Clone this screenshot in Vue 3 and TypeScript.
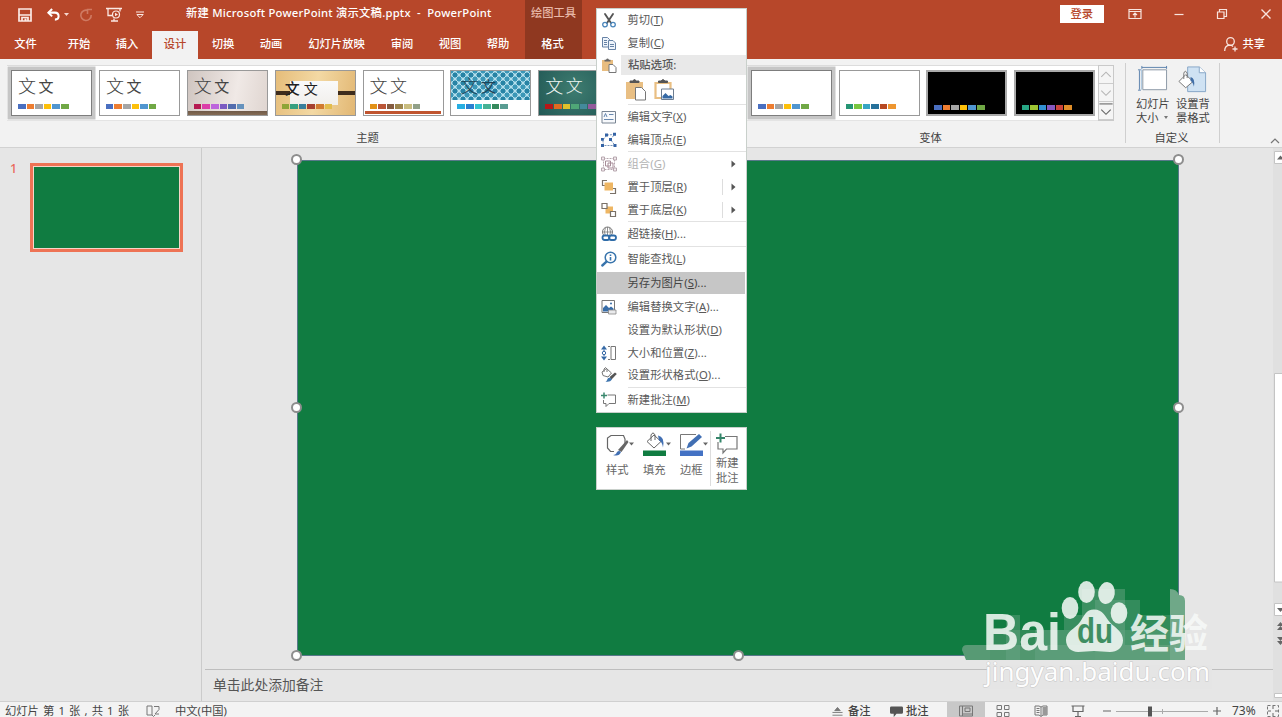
<script setup lang="ts">
interface Tab { label: string; width: number; gap?: number; active?: boolean }
interface MenuRow { kind: 'item' | 'sep' | 'head' | 'paste'; text?: string; key?: string; tail?: string; icon?: string; arrow?: boolean; split?: boolean; disabled?: boolean; selected?: boolean; blank?: boolean }
interface Thumb { skin: string; colors: string[]; selected?: boolean }

const tabs: Tab[] = [
  { label: '文件', width: 51 },
  { label: '开始', width: 48, gap: 4 },
  { label: '插入', width: 48 },
  { label: '设计', width: 48, active: true },
  { label: '切换', width: 48 },
  { label: '动画', width: 48 },
  { label: '幻灯片放映', width: 83 },
  { label: '审阅', width: 48 },
  { label: '视图', width: 48 },
  { label: '帮助', width: 48 },
]

const office = ['#4a6fc0', '#ed7d31', '#a5a5a5', '#fdc00a', '#5096d0', '#70a845']
const themes: Thumb[] = [
  { skin: 'plain', colors: office, selected: true },
  { skin: 'plain', colors: office },
  { skin: 'hall', colors: ['#b51a50', '#dc3da8', '#bd65dc', '#7b5bc2', '#536dae', '#6692bd'] },
  { skin: 'wood', colors: ['#8fa536', '#36a080', '#397f9c', '#a6402f', '#d17b30', '#e2bd4e'] },
  { skin: 'retro', colors: ['#e29116', '#bb5638', '#855c40', '#9d864e', '#c9bd80', '#91a088'] },
  { skin: 'dots', colors: ['#27aee2', '#297fd1', '#34c4d0', '#46b295', '#35895c', '#599c92'] },
  { skin: 'board', colors: ['#b71718', '#df6b22', '#dfc12b', '#4fa677', '#438a9b', '#925a9b'] },
]
const variants: Thumb[] = [
  { skin: 'plain', colors: office, selected: true },
  { skin: 'plain', colors: ['#259574', '#78c640', '#36a5c4', '#26719b', '#b74822', '#ee9630'] },
  { skin: 'black', colors: office },
  { skin: 'black', colors: ['#27a684', '#9dc433', '#328fd2', '#8557bf', '#c9433b', '#df8d28'] },
]

const rows: MenuRow[] = [
  { kind: 'item', text: '剪切', key: 'T', icon: 'cut' },
  { kind: 'item', text: '复制', key: 'C', icon: 'copy' },
  { kind: 'head', text: '粘贴选项:', icon: 'paste' },
  { kind: 'paste' },
  { kind: 'sep' },
  { kind: 'item', text: '编辑文字', key: 'X', icon: 'text' },
  { kind: 'item', text: '编辑顶点', key: 'E', icon: 'points' },
  { kind: 'sep' },
  { kind: 'item', text: '组合', key: 'G', icon: 'group', arrow: true, disabled: true },
  { kind: 'item', text: '置于顶层', key: 'R', icon: 'front', arrow: true, split: true },
  { kind: 'item', text: '置于底层', key: 'K', icon: 'back', arrow: true, split: true },
  { kind: 'sep' },
  { kind: 'item', text: '超链接', key: 'H', tail: '...', icon: 'link' },
  { kind: 'sep' },
  { kind: 'item', text: '智能查找', key: 'L', icon: 'lookup' },
  { kind: 'sep', blank: true },
  { kind: 'item', text: '另存为图片', key: 'S', tail: '...', selected: true },
  { kind: 'sep', blank: true },
  { kind: 'item', text: '编辑替换文字', key: 'A', tail: '...', icon: 'alt' },
  { kind: 'item', text: '设置为默认形状', key: 'D' },
  { kind: 'item', text: '大小和位置', key: 'Z', tail: '...', icon: 'size' },
  { kind: 'item', text: '设置形状格式', key: 'O', tail: '...', icon: 'format' },
  { kind: 'sep' },
  { kind: 'item', text: '新建批注', key: 'M', icon: 'comment' },
]

const icons: Record<string, string> = {
  cut: '<g fill="none" stroke-linecap="round"><path d="M4 2l6 9M12 2L6 11" stroke="#555" stroke-width="1.9"/><circle cx="4" cy="12.6" r="2.3" stroke="#4b86bb" stroke-width="1.3"/><circle cx="12" cy="12.6" r="2.3" stroke="#4b86bb" stroke-width="1.3"/></g>',
  copy: '<g stroke="#6682a5" fill="#eef4fb"><path d="M1.5 2.500h5l2 2v7.500h-7z"/><path d="M7.500 5.500h4.500l2.500 2.500v6.500h-7z"/><path d="M3 5.500h3M3 7.500h3M3 9.500h3M9 9.500h4M9 11.500h4" fill="none"/></g>',
  paste: '<path d="M1 3h11v11h-11z" fill="#e8bd80"/><path d="M3.500 4.500V2.800h1.500q1.500-2.600 3 0h1.500v1.700z" fill="#666"/><path d="M8 7.500h4l3 3V15.500H8z" fill="#fff" stroke="#777"/>',
  text: '<path d="M1 2.500h13.500v11.500H1z" fill="#f7f9fc" stroke="#788493"/><path d="M3 8l1.500-3.500L6 8M8 5.500h4.500M3 10.500h9.500" fill="none" stroke="#577ba6" stroke-width=".9"/>',
  points: '<path d="M2.500 13.500L1.800 8 6 3l7.500-.5-4 5 4.500 6z" fill="none" stroke="#7a96b8" stroke-dasharray="2 1"/><g fill="#3463a5"><path d="M0 12h3v3H0zM0 6h2.800v2.800H0zM4 1.500h3v3H4zM12 .8h3v3h-3zM8 6h3v3H8zM12.500 12h3v3h-3z"/></g>',
  group: '<g fill="none" stroke="#b6a6ae"><path d="M2.500 2.500h11v11h-11z" stroke-dasharray="2 1"/><path d="M4.500 5h5v5h-5zM7 7h5v5H7z" stroke="#a78c98"/><path d="M.5 1h3v3h-3zM12.500 1h3v3h-3zM.5 12h3v3h-3zM12.500 12h3v3h-3z" fill="#f3ecef"/></g>',
  front: '<path d="M6 1.500H1.500v5h4M9 14.500h5.500v-5H10" fill="#fff" stroke="#7a7168" stroke-width="1.200"/><path d="M3.500 3.500h8.500v8H3.500z" fill="#eeb663"/>',
  back: '<path d="M4.500 4.500h7.500v7H4.500z" fill="#eeb663"/><path d="M1 1.500h5v5H1zM9.500 9.500h5v5h-5z" fill="#fff" stroke="#7a7168" stroke-width="1.200"/>',
  link: '<g fill="none"><circle cx="6.500" cy="6" r="5" stroke="#777"/><path d="M1.500 6h10M6.500 1v10M4.500 1.500q-2 4.500 0 9M8.500 1.500q2 4.500 0 9" stroke="#777" stroke-width=".8"/><rect x="1.500" y="9.500" width="7" height="4.500" rx="2.200" fill="#fff" stroke="#2f6ca8" stroke-width="1.800"/><rect x="8" y="9.500" width="7" height="4.500" rx="2.200" stroke="#2f6ca8" stroke-width="1.800"/></g>',
  lookup: '<circle cx="9.500" cy="6.500" r="5.300" fill="#fff" stroke="#3874ac" stroke-width="1.500"/><path d="M5.500 10.700L1.300 14.500" stroke="#3874ac" stroke-width="2.400" stroke-linecap="round"/><path d="M9.500 6v3.600M9.500 3.500v1.400" stroke="#3874ac" stroke-width="1.600"/>',
  alt: '<path d="M1 1.500h12.500v12H1z" fill="#fff" stroke="#777"/><path d="M2 12.500V9l3-3 3 3 2-1.500 2.500 2v3z" fill="#386da8"/><circle cx="10" cy="4.500" r="1" fill="#386da8"/><path d="M7.500 11h7.500v4H7.500z" fill="#e9eaec" stroke="#888" stroke-width=".8"/>',
  size: '<path d="M3 2v12" stroke="#3366a5" stroke-dasharray="1.500 1"/><path d="M0 4.500L3 .5l3 4zM0 11.500l3 4 3-4z" fill="#3569a6"/><circle cx="3" cy="8" r="1.700" fill="#fff" stroke="#3569a6"/><path d="M10 1.500h4.500v13H10z" fill="#fff" stroke="#777"/><path d="M7 1.500h2M7 14.500h2" stroke="#777"/>',
  format: '<path d="M1 5l4.500-3.500L10.500 6 7 10 2 8.500z" fill="#fff" stroke="#777"/><path d="M3 5V2q1.500-3 3 0v3" fill="none" stroke="#777"/><path d="M8.500 10l5.500-4.500 1.800 1.500L10.500 12.500z" fill="#555"/><path d="M4.500 14.500q1.500-.5 2-2.500 1-2 3-1l1.500 1.500q-2 3-6.500 2z" fill="#3f75ae"/>',
  comment: '<path d="M6.500 3h8v8.500H8l-3 3v-3H2.500V8" fill="none" stroke="#777"/><path d="M3 .5v6M0 3.500h6" stroke="#39876d" stroke-width="1.500"/>',
}
</script>

<template>
  <div class="window">
    <header class="top">
      <div class="titlebar">
        <div class="quick">
          <svg class="q save" viewBox="0 0 14 14"><path d="M1 1h12v12H1z" fill="none" stroke="#fbe9e4" stroke-width="1.700"/><path d="M1 7h12M4 13V9.500h6V13" stroke="#fbe9e4" stroke-width="1.700" fill="none"/><path d="M6.500 10.500h2V13h-2z" fill="#fbe9e4"/></svg>
          <svg class="q undo" viewBox="0 0 14 14"><path d="M1.500 5h7q4 0 4 4 0 3.500-4 3.500" fill="none" stroke="#fff" stroke-width="2.200"/><path d="M5.500 1L1.500 5l4 4" fill="none" stroke="#fff" stroke-width="2.200"/></svg>
          <svg class="q tiny" viewBox="0 0 5 3"><path d="M0 0h5L2.500 3z" fill="#f6d8cf"/></svg>
          <svg class="q redo" viewBox="0 0 14 14"><path d="M9 2.500A5.200 5.200 0 1 0 12.200 7M8.500 6V1.500h4.500" fill="none" stroke="#cf7a63" stroke-width="1.600"/></svg>
          <svg class="q show" viewBox="0 0 16 15"><path d="M0 1.500h16M2 1.500v7h4M14 1.500v3M5 14h7M8 11.500V14" fill="none" stroke="#fbe9e4" stroke-width="1.300"/><circle cx="10" cy="7.500" r="3.500" fill="#b7472a" stroke="#fbe9e4" stroke-width="1.200"/><path d="M9 5.700v3.600l3-1.800z" fill="#fbe9e4"/></svg>
          <svg class="q more" viewBox="0 0 8 8"><path d="M0 1h8" stroke="#fbe9e4"/><path d="M.8 3.500h6.400L4 6.700z" fill="none" stroke="#fbe9e4"/></svg>
        </div>
        <div class="doc-title">新建 Microsoft PowerPoint 演示文稿.pptx&nbsp; -&nbsp; PowerPoint</div>
        <div class="tool-title">绘图工具</div>
        <div class="sys">
          <button class="login">登录</button>
          <svg viewBox="0 0 14 12"><path d="M1 1.500h12v9H1zM1 3.500h12M7 9.500V5M5 7l2-2 2 2" fill="none" stroke="#f8e4de" stroke-width="1.200"/></svg>
          <svg viewBox="0 0 14 12"><path d="M2.500 6.500h9" stroke="#f8e4de" stroke-width="1.200"/></svg>
          <svg viewBox="0 0 14 12"><path d="M2.500 4h6.500v6.500H2.500zM4.500 4V1.500H11.500V8.500H9" fill="none" stroke="#f8e4de" stroke-width="1.200"/></svg>
          <svg viewBox="0 0 14 12"><path d="M2.500 1.500l9 9M11.500 1.500l-9 9" stroke="#f8e4de" stroke-width="1.400"/></svg>
        </div>
      </div>
      <nav class="tabs">
        <div v-for="t in tabs" :key="t.label" class="tab" :class="{ active: t.active }" :style="{ width: t.width + 'px', marginLeft: (t.gap ?? 0) + 'px' }"><span>{{ t.label }}</span></div>
        <div class="tab tool">格式</div>
        <div class="share">
          <svg viewBox="0 0 14 15"><circle cx="6.500" cy="4.500" r="3.800" fill="none" stroke="#f8e4de" stroke-width="1.300"/><path d="M.7 14q0-5.500 5-5.800 2 0 3.300 1.300M11 9.500v5M8.500 12h5" fill="none" stroke="#f8e4de" stroke-width="1.300"/></svg>
          <span>共享</span>
        </div>
      </nav>
    </header>

    <section class="ribbon">
      <div class="group themes">
        <div class="gallery">
          <div v-for="(t, i) in themes" :key="i" class="thumb" :class="[t.skin, { selected: t.selected }]">
            <div class="glyphs"><span class="g1">文</span><span class="g2">文</span></div>
            <div class="swatches"><i v-for="c in t.colors" :key="c" :style="{ background: c }"></i></div>
          </div>
        </div>
        <div class="caption">主题</div>
      </div>
      <div class="group variants">
        <div class="gallery">
          <div v-for="(t, i) in variants" :key="i" class="thumb" :class="[t.skin, { selected: t.selected }]">
            <div class="glyphs"></div>
            <div class="swatches"><i v-for="c in t.colors" :key="c" :style="{ background: c }"></i></div>
          </div>
          <div class="scroller">
            <svg viewBox="0 0 14 18"><path d="M2 11.500l5-5 5 5" fill="none" stroke="#b5b5b5" stroke-width="1.100"/></svg>
            <svg viewBox="0 0 14 18"><path d="M2 7l5 5 5-5" fill="none" stroke="#b5b5b5" stroke-width="1.100"/></svg>
            <svg viewBox="0 0 14 18"><path d="M0 2h14" stroke="#888" stroke-width="1.500"/><path d="M2 8l5 5 5-5" fill="none" stroke="#666" stroke-width="1.200"/></svg>
          </div>
        </div>
        <div class="caption">变体</div>
      </div>
      <div class="group custom">
        <div class="big-buttons">
          <div class="big">
            <svg viewBox="0 0 32 30"><path d="M5 2h26M2.500 5v20" stroke="#5d83ad"/><path d="M5 .5v3M30.500 .5v3M1 4.500h3M1 25.500h3" stroke="#5d83ad"/><path d="M6 4.500h24.500v20.500H6z" fill="#fff" stroke="#8b98a5"/><path d="M4.500 4v21" stroke="#a6c3de"/></svg>
            <span>幻灯片<br>大小<b></b></span>
          </div>
          <div class="big">
            <svg viewBox="0 0 32 30"><path d="M11 1.500h12l6.500 6v19.500H11z" fill="#cfe2f3" stroke="#86a6c7"/><path d="M23 1.500v6h6.500" fill="#fff" stroke="#86a6c7"/><path d="M2 16.500L9 9.500l7.500 7-7.500 6.500z" fill="#fff" stroke="#777"/><path d="M7 14V8q1.500-4 3.500 0v5" fill="none" stroke="#777"/><path d="M14 12q5 1 3.500 10-1-5-3.500-6z" fill="#416ea6"/></svg>
            <span>设置背<br>景格式</span>
          </div>
        </div>
        <div class="caption">自定义</div>
      </div>
      <svg class="collapse" viewBox="0 0 10 6"><path d="M1 5l4-4 4 4" fill="none" stroke="#777" stroke-width="1.200"/></svg>
    </section>

    <main class="work">
      <aside class="outline">
        <span class="num">1</span>
        <div class="slide-thumb"></div>
      </aside>
      <div class="stage">
        <div class="canvas">
          <div class="slide">
            <i class="h tl"></i><i class="h tr"></i><i class="h ml"></i><i class="h mr"></i><i class="h bl"></i><i class="h bc"></i>
          </div>
        </div>
        <div class="notes">单击此处添加备注</div>
      </div>
      <div class="vscroll">
        <svg viewBox="0 0 10 553"><g fill="#fff" stroke="#c4c4c4"><path d="M1.500 3.500h12v12h-12zM1.500 225.500h12v208.500h-12zM1.500 455.500h12v12h-12zM1.500 545.500h12v4h-12z"/></g><g fill="#666"><path d="M4 11.500l3.500-4 3.500 4zM4 460l3.500 4 3.500-4zM4 478l3.500-4 3.500 4zM4 482l3.500-4 3.500 4zM4 489l3.500 4 3.500-4zM4 493l3.500 4 3.500-4z"/></g></svg>
      </div>
    </main>

    <footer class="status">
      <span class="s-slide">幻灯片 第 1 张 , 共 1 张</span>
      <svg class="s-book" viewBox="0 0 14 12"><path d="M1 1h5v9H1zM6 10l1.500 1.500L9 10M8 1.500h5v3L9 9H13" fill="none" stroke="#777"/></svg>
      <span class="s-lang">中文(中国)</span>
      <div class="s-right">
        <svg class="s-ic" viewBox="0 0 12 12"><path d="M3 4.500L6 1l3 3.500zM.5 6.500h11M.5 9.500h11" fill="#777" stroke="#777"/></svg>
        <span class="s-note">备注</span>
        <svg class="s-bub" viewBox="0 0 14 12"><path d="M1.500 0h11q1.500 0 1.500 1.500v5q0 1.500-1.500 1.500H7l-3 3.500V8H1.500Q0 8 0 6.500v-5Q0 0 1.500 0z" fill="#555"/></svg>
        <span class="s-com">批注</span>
        <div class="view on"><svg viewBox="0 0 14 12"><path d="M.5 1h13v10H.5zM3.500 1v10M6 3h5v3.500H6zM3.500 9H13" fill="none" stroke="#777"/></svg></div>
        <div class="view"><svg viewBox="0 0 14 12"><path d="M1 .5h4.500v4H1zM8.500 .5H13v4H8.500zM1 7.500h4.500v4H1zM8.500 7.500H13v4H8.500z" fill="none" stroke="#777"/></svg></div>
        <div class="view"><svg viewBox="0 0 14 12"><path d="M1 1h4l2 1 2-1h4v9H9l-2 1.500L5 10H1zM7 2v9M2.500 3.500h3M2.500 5.500h3M2.500 7.500h3" fill="none" stroke="#777"/><path d="M8.500 2H13v8H8.500z" fill="#999"/></svg></div>
        <div class="view"><svg viewBox="0 0 14 12"><path d="M.5 1h13M2 1v5.500h10V1M7 6.500v5M4 11.500h6" fill="none" stroke="#666" stroke-width="1.200"/></svg></div>
        <svg class="s-zoom" viewBox="0 0 120 14"><path d="M1 7h8M111 7h8M115 3v8" stroke="#666" stroke-width="1.200"/><path d="M14 7.500h92M60.500 5v5" stroke="#aaa"/><path d="M46 2.500h4v10h-4z" fill="#555"/></svg>
        <span class="s-pct">73%</span>
        <svg class="s-fit" viewBox="0 0 12 12"><path d="M.5 .5h11v11H.5z" fill="none" stroke="#777" stroke-dasharray="3 2"/><path d="M6 1v3M6 8v3M1 6h3M8 6h3" stroke="#666"/></svg>
      </div>
    </footer>

    <svg class="watermark" viewBox="950 570 270 125">
      <path d="M987 665h225v24H987z" fill="#e5e5e5"/>
      <path d="M962 650q0-5 5-5h218v15H966z" fill="#579a74"/>
      <path d="M990 630h195v30H990z" fill="#4d966c" opacity=".55"/>
      <path d="M1006 615h14v45h-14zM1035 630h30v30h-30zM1064 615h31v45h-31z" fill="#69a584" opacity=".45"/>
      <path d="M1082 589h43v56h-43z" fill="#65a381" opacity=".5"/>
      <path d="M1095 600h45v60h-45z" fill="#76ad8f" opacity=".35"/>
      <path d="M1140 615h45v45h-45z" fill="#7eb396" opacity=".3"/>
      <path d="M1170 589q7 0 9 6 6 0 6 6v59h-15z" fill="#6fa888"/>
      <g class="ink">
        <text x="983" y="650" class="bai" textLength="78" lengthAdjust="spacingAndGlyphs">Bai</text>
        <g class="paw">
          <ellipse cx="1070" cy="608" rx="8.300" ry="11"/>
          <ellipse cx="1086.500" cy="592" rx="8.300" ry="11"/>
          <ellipse cx="1106.500" cy="593" rx="8.300" ry="11" transform="rotate(8 1106 593)"/>
          <ellipse cx="1119" cy="613" rx="8.300" ry="10.800"/>
          <path d="M1094 609.500c9 0 11 7 16 13 6 6 13 9 13 18 0 7-6 11.500-13 11.500-6 0-10-1-16-1s-10 1-16 1c-7 0-12-5-12-12 0-9 9-11 14-18 4-6 6-12.500 14-12.500z"/>
        </g>
        <text x="1077" y="643" class="du" textLength="36" lengthAdjust="spacingAndGlyphs">du</text>
        <text x="1130" y="648" class="jy" textLength="78" lengthAdjust="spacingAndGlyphs">经验</text>
        <text x="985" y="681" class="url" textLength="225" lengthAdjust="spacingAndGlyphs">jingyan.baidu.com</text>
      </g>
    </svg>

    <div class="menu">
      <template v-for="(r, i) in rows" :key="i">
        <div v-if="r.kind === 'sep'" class="sep" :class="{ blank: r.blank }"></div>
        <div v-else-if="r.kind === 'paste'" class="paste-row">
          <svg viewBox="0 0 22 24"><path d="M0 4h17v17H0z" fill="#e9bf83"/><path d="M4 4.500V3h2.500q2-3 4 0H13v1.500z" fill="#555" stroke="#555"/><path d="M9.500 9.500h6l4 4V22H9.500z" fill="#fff" stroke="#777"/></svg>
          <svg viewBox="0 0 22 24"><path d="M1.500 5h15v15h-15z" fill="#fff" stroke="#e9bf83" stroke-width="2.200"/><path d="M4.500 4.500V3H7q2-3 4 0h2.500v1.500z" fill="#555" stroke="#555"/><path d="M7.500 11h12v10.500h-12z" fill="#fff" stroke="#6d7d90"/><path d="M8.500 20.500V18l3-3 3 3 2-1 2 1.500v2z" fill="#376aa5"/></svg>
        </div>
        <div v-else class="row" :class="[r.kind, { disabled: r.disabled, selected: r.selected }]">
          <span class="ico"><svg v-if="r.icon" viewBox="0 0 16 16" v-html="icons[r.icon]"></svg></span>
          <span class="label">{{ r.text }}<template v-if="r.key">(<u>{{ r.key }}</u>)</template>{{ r.tail }}</span>
          <span v-if="r.arrow" class="arrow" :class="{ split: r.split }"><svg viewBox="0 0 5 8"><path d="M.5 .5L4.500 4 .5 7.500z" fill="#555"/></svg></span>
        </div>
      </template>
    </div>

    <div class="mini">
      <div class="tool-btn"><svg viewBox="0 0 32 26"><path d="M20 13v-6l-1.500-3.500H6L2.500 6v10l3 3.500H9" fill="none" stroke="#666" stroke-width="1.200"/><path d="M13 18l9-10 1.500 2-7 10z" fill="#666"/><path d="M8 23q3 0 4-3 2-2 4 0-2 5-8 3z" fill="#416fb3"/><path d="M24 10.500h5l-2.500 3z" fill="#666"/></svg><span>样式</span></div>
      <div class="tool-btn"><svg viewBox="0 0 32 26"><path d="M5 9.500l7-6.500 7 6.500-7 6.500z" fill="#fff" stroke="#666"/><path d="M9 9V3q2-4 4 0v5" fill="none" stroke="#666"/><path d="M16 3.500q7 1 5 12-1-6-4-7z" fill="#416fb3"/><path d="M1 18.500h23V24H1z" fill="#107c41"/><path d="M24 10.500h5l-2.500 3z" fill="#666"/></svg><span>填充</span></div>
      <div class="tool-btn"><svg viewBox="0 0 32 26"><path d="M17 2.500H1.500v14.500H6" fill="none" stroke="#777"/><path d="M7.500 16.500l2-5.500 10.500-9 3 3-10.500 9.500z" fill="#416fb3"/><path d="M1 18.500h23V24H1z" fill="#4472c4"/><path d="M24 10.500h5l-2.500 3z" fill="#666"/></svg><span>边框</span></div>
      <div class="tool-btn note"><svg viewBox="0 0 22 21"><path d="M9 3.500h12v12.500h-10.500l-3.500 4v-4H2V9" fill="none" stroke="#777" stroke-width="1.200"/><path d="M4.500 .5v9M0 5h9" stroke="#35856a" stroke-width="2"/></svg><span>新建<br>批注</span></div>
    </div>
  </div>
</template>

<style>
body { margin: 0; overflow: hidden; }
</style>

<style scoped>
.window { position: relative; width: 1282px; height: 717px; overflow: hidden; display: flex; flex-direction: column; background: #e6e6e6; font: 11.300px/16px "Noto Sans", "Noto Sans CJK SC", sans-serif; color: #444; white-space: nowrap; }
svg { display: block; flex: none; overflow: visible; }
.top { height: 59px; flex: none; background: #b7472a; color: #fff; font-weight: 500; }
.titlebar { height: 29px; display: flex; }
.quick { width: 186px; display: flex; align-items: center; flex: none; box-sizing: border-box; padding-left: 18px; height: 29px; }
.save { width: 14px; height: 14px; }
.undo { width: 15px; height: 13px; margin-left: 14px; }
.tiny { width: 5px; height: 3px; margin-left: 3px; }
.redo { width: 14px; height: 14px; margin-left: 10px; }
.show { width: 16px; height: 15px; margin-left: 13px; }
.more { width: 8px; height: 8px; margin-left: 14px; }
.doc-title { width: 339px; flex: none; line-height: 26px; letter-spacing: .22px; }
.tool-title { width: 57px; flex: none; background: #8f3820; line-height: 26px; text-align: center; color: #e8b8a8; }
.sys { margin-left: auto; display: flex; align-items: center; height: 27px; gap: 29.700px; padding-right: 9px; }
.sys svg { width: 14px; height: 12px; }
.login { border: 0; padding: 0; width: 44px; height: 18px; margin-right: -5.500px; background: #fff; color: #b7472a; font: inherit; line-height: 18px; }
.tabs { height: 30px; display: flex; }
.tab { flex: none; text-align: center; line-height: 30px; height: 30px; }
.tab.active { color: #b7472a; }
.tab.active span { display: block; margin: 2px 1px 0 1px; height: 28px; line-height: 26px; background: #f2f2f2; }
.tab.tool { margin-left: 3px; width: 57px; background: #8f3820; box-sizing: border-box; padding-right: 2px; }
.share { margin-left: auto; display: flex; align-items: center; gap: 4px; padding-right: 17px; }
.share svg { width: 14px; height: 15px; }

.ribbon { height: 88px; flex: none; display: flex; background: #f2f2f2; border-bottom: 1px solid #d2d2d2; }
.group { flex: none; display: flex; flex-direction: column; padding-top: 6px; box-sizing: border-box; height: 88px; }
.themes { width: 721px; margin-left: 7px; }
.variants { width: 367px; margin-left: 19px; }
.gallery { height: 56px; box-sizing: border-box; background: #fff; border-top: 1px solid #dcdcdc; border-bottom: 1px solid #e4e4e4; display: flex; gap: 6.900px; padding: 4px 0 0 4px; }
.thumb { width: 81px; height: 46px; flex: none; box-sizing: border-box; border: 1.500px solid #999; background: #fff; padding-left: 6px; color: #444; }
.thumb.selected { box-shadow: 0 0 0 3.500px #c6c6c6; border-color: #7d7d7d; }
.glyphs { height: 32.500px; display: flex; align-items: flex-start; }
.g1 { font-size: 18px; line-height: 30px; font-weight: 300; width: 20.500px; }
.g2 { font-size: 15px; line-height: 31px; font-weight: 400; }
.swatches { display: flex; gap: 1px; }
.swatches i { width: 7.600px; height: 5px; display: block; }
.thumb.hall { background: linear-gradient(#6f5a48, #856c55) 0 100%/100% 4px no-repeat, linear-gradient(100deg, #cfc5c0, #f0e9e6 60%, #dfd5d0); }
.thumb.wood { background: linear-gradient(#fafafa, #f1efec) 14px 10px/48px 24px no-repeat, linear-gradient(#3e2c1c, #3e2c1c) 0 20px/100% 4px no-repeat, linear-gradient(100deg, #e6bd7a, #f3d9a4 50%, #e2b773); color: #222; }
.wood .glyphs { margin-left: 3px; }
.wood .g1 { font-weight: 500; font-size: 15px; line-height: 34px; width: 19px; }
.wood .g2 { font-size: 14px; line-height: 35px; }
.thumb.retro { background: linear-gradient(#c0542f, #c0542f) 1px 98%/76px 3px no-repeat, #fff; }
.retro .g2, .board .g2 { font-size: 17px; font-weight: 300; line-height: 30px; }
.thumb.dots { background: linear-gradient(#fff, #fff) 0 100%/100% 15px no-repeat, radial-gradient(circle, #2783a5 2.300px, transparent 2.800px) 0 0/8px 8px, radial-gradient(circle, #3b97b7 2.300px, #b5dfec 2.800px) 4px 4px/8px 8px; color: #1d4558; }
.dots .glyphs { margin-left: 3px; }
.thumb.board { background: radial-gradient(circle at 45% 40%, #3e7c70, #1e5452); color: #eef5f2; }
.thumb.black { background: #000; border: 2px solid #aaa; }
.scroller { margin: -5px 1px 0 auto; width: 16px; height: 56px; border: 1px solid #c9c9c9; box-sizing: border-box; background: #f5f5f5; flex: none; }
.scroller svg { width: 14px; height: 18px; border-bottom: 1px solid #ccc; box-sizing: border-box; }
.variants .gallery { gap: 6.500px; width: 365px; padding-right: 0; }
.scroller { margin-left: -3px; }
.caption { text-align: center; line-height: 16px; margin-top: 9px; }
.custom { width: 95px; margin-left: 11px; border: solid #cfcfcf; border-width: 0 1px; margin-top: 4px; height: 80px; padding-top: 2px; }
.big-buttons { display: flex; padding-left: 10px; gap: 6px; height: 60px; }
.big { width: 34px; display: flex; flex-direction: column; line-height: 14px; }
.big svg { width: 31px; height: 30px; margin-bottom: 2px; margin-left: 1px; }
.big b { display: inline-block; border: 2px solid transparent; border-top: 3px solid #777; border-bottom: 0; margin: 0 0 3px 5px; }
.custom .caption { margin-top: 5px; padding-right: 2px; }
.collapse { width: 10px; height: 6px; margin: 79px 2px 0 auto; }

.work { height: 553px; flex: none; display: flex; }
.outline { width: 201px; border-right: 1px solid #cbcbcb; display: flex; align-items: flex-start; }
.num { color: #ea6a5c; width: 20px; margin: 13px 0 0 10px; font-size: 12.500px; line-height: 16px; font-weight: 500; }
.slide-thumb { margin: 18px 0 0 3px; width: 145px; height: 81px; background: #107c41; border: 1px solid #f8d5c8; outline: 3px solid #ee7355; }
.stage { width: 1071px; flex: none; display: flex; flex-direction: column; padding-left: 3px; box-sizing: border-box; }
.canvas { height: 521px; padding: 12px 0 0 92px; box-sizing: border-box; }
.slide { width: 882px; height: 496px; box-sizing: border-box; background: #107c41; position: relative; border: 1px solid #58788a; }
.h { position: absolute; width: 7px; height: 7px; border: 2px solid #8e8e8e; border-radius: 50%; background: #fff; }
.tl { left: -7px; top: -7px; }
.tr { right: -6px; top: -7px; }
.ml { left: -7px; top: 241px; }
.mr { right: -6px; top: 241px; }
.bl { left: -7px; bottom: -6px; }
.bc { left: 435px; bottom: -6px; }
.notes { border-top: 1px solid #bebebe; height: 31px; line-height: 30px; padding-left: 8px; font-size: 13.800px; color: #555; }
.vscroll { width: 9px; background: #e0e0e0; overflow: hidden; }
.vscroll svg { width: 10px; height: 553px; }

.status { height: 16px; flex: none; display: flex; background: #f3f3f3; border-top: 1px solid #d0d0d0; box-sizing: border-box; line-height: 17px; align-items: flex-start; }
.s-slide { width: 140px; padding-left: 5px; word-spacing: 1.200px; }
.s-book { width: 14px; height: 12px; margin: 3px 15px 0 1px; }
.s-right { margin-left: auto; display: flex; align-items: flex-start; width: 450px; flex: none; }
.s-ic { width: 11px; height: 12px; margin: 4px 5px 0 0; }
.s-note { width: 42px; font-weight: 500; }
.s-bub { width: 13px; height: 12px; margin: 4px 3px 0 0; }
.s-com { width: 41px; font-weight: 500; }
.view { width: 37.500px; height: 15px; display: flex; justify-content: center; padding-top: 3px; box-sizing: border-box; flex: none; }
.view.on { background: #c8c8c8; }
.view svg { width: 14px; height: 12px; }
.s-zoom { width: 120px; height: 14px; margin: 2px 10px 0 5px; }
.s-pct { width: 35px; font-size: 12px; flex: none; }
.s-fit { width: 12px; height: 12px; margin-top: 3px; }

.watermark { position: absolute; left: 950px; top: 570px; width: 270px; height: 125px; }
.ink { fill: #f7faf8; fill-opacity: .86; font-family: "Liberation Sans", "Noto Sans CJK SC", sans-serif; }
.bai { font-size: 51px; font-weight: 700; }
.du { font-size: 35px; font-weight: 700; fill: #3f8f62; fill-opacity: 1; }
.jy { font-size: 40px; font-weight: 700; font-family: "Noto Sans CJK SC", sans-serif; }
.url { font-size: 26px; font-family: "Noto Sans", sans-serif; fill: #fdfdfd; fill-opacity: 1; stroke: #c6c6c6; stroke-width: 1px; paint-order: stroke; }

.menu { position: absolute; left: 596px; top: 8px; width: 149px; height: 403px; border: 1px solid #c9d0cb; background: #fff; color: #5a5a5a; }
.row { height: 22.700px; display: flex; align-items: center; }
.ico { width: 24px; flex: none; padding-left: 4px; box-sizing: border-box; }
.ico svg { width: 16px; height: 16px; }
.label { flex: 1; padding-left: 6.500px; line-height: 20px; letter-spacing: .04px; }
.label u { text-underline-offset: 1px; }
.row.head { height: 21px; }
.head .label { background: #e9e9e9; font-weight: 500; line-height: 20px; padding-left: 7px; }
.disabled { color: #b3b3b3; }
.row.selected { background: #c6c6c6; color: #444; margin: 0 1px 0 0; }
.arrow { width: 24px; height: 16px; display: flex; align-items: center; padding-left: 7px; box-sizing: border-box; }
.arrow.split { border-left: 1px solid #ddd; padding-left: 6px; }
.arrow svg { width: 5px; height: 8px; margin-left: 2px; }
.sep { height: 1.700px; margin-left: 31px; background: linear-gradient(#e2e2e2, #e2e2e2) 0 0/100% 1px no-repeat; }
.sep.blank { background: none; }
.paste-row { height: 29px; display: flex; padding: 3px 0 0 29px; gap: 6px; box-sizing: border-box; }
.paste-row svg { width: 22px; height: 24px; }

.mini { position: absolute; left: 596px; top: 427px; width: 141px; height: 61px; border: 1px solid #c9d0cb; background: #fff; display: flex; padding-left: 8px; color: #666; }
.tool-btn { width: 37px; flex: none; display: flex; flex-direction: column; padding-top: 4px; box-sizing: border-box; }
.tool-btn svg { width: 32px; height: 26px; }
.tool-btn span { line-height: 16px; margin-top: 4px; padding-left: 1px; }
.tool-btn.note { width: 32px; margin: 3px 0 0 -6px; padding: 2px 0 0 5px; border-left: 1px solid #ddd; height: 55px; }
.note svg { width: 22px; height: 21px; }
.note span { line-height: 14.500px; margin-top: 2px; padding-left: 0; }
</style>
